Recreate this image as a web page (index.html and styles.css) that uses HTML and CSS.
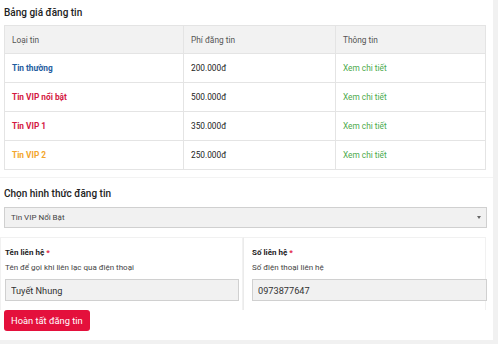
FILE: index.html
```html
<!DOCTYPE html>
<html lang="vi">
<head>
    <meta charset="UTF-8">
    <meta name="viewport" content="width=device-width, initial-scale=1.0">
    <title>Đăng tin</title>
    <link rel="stylesheet" href="styles.css">
</head>
<body>

<div class="page">
    <div class="section">
        <h2 class="section-title">Bảng giá đăng tin</h2>
        <table class="price-table">
            <thead>
                <tr>
                    <th class="col-type">Loại tin</th>
                    <th class="col-fee">Phí đăng tin</th>
                    <th>Thông tin</th>
                </tr>
            </thead>
            <tbody>
                <tr>
                    <td class="type type-normal">Tin thường</td>
                    <td>200.000đ</td>
                    <td><a class="detail" href="#">Xem chi tiết</a></td>
                </tr>
                <tr>
                    <td class="type type-vip">Tin VIP nổi bật</td>
                    <td>500.000đ</td>
                    <td><a class="detail" href="#">Xem chi tiết</a></td>
                </tr>
                <tr>
                    <td class="type type-vip">Tin VIP 1</td>
                    <td>350.000đ</td>
                    <td><a class="detail" href="#">Xem chi tiết</a></td>
                </tr>
                <tr>
                    <td class="type type-vip2">Tin VIP 2</td>
                    <td>250.000đ</td>
                    <td><a class="detail" href="#">Xem chi tiết</a></td>
                </tr>
            </tbody>
        </table>
    </div>

    <div class="section section-form">
        <h2 class="section-title">Chọn hình thức đăng tin</h2>
        <div class="select">
            <span>Tin VIP Nổi Bật</span>
            <span class="select-arrow"></span>
        </div>

        <div class="contact-row">
            <div class="field">
                <label class="field-label">Tên liên hệ <span class="req">*</span></label>
                <div class="field-help">Tên để gọi khi liên lạc qua điện thoại</div>
                <input class="field-input" type="text" value="Tuyết Nhung">
            </div>
            <div class="field">
                <label class="field-label">Số liên hệ <span class="req">*</span></label>
                <div class="field-help">Số điện thoại liên hệ</div>
                <input class="field-input" type="text" value="0973877647">
            </div>
        </div>

        <button class="submit-btn">Hoàn tất đăng tin</button>
    </div>
</div>

</body>
</html>
```

FILE: styles.css
```css
* {
    box-sizing: border-box;
}

body {
    margin: 0;
    background-color: #f1f1f1;
    font-family: Roboto, "Liberation Sans", sans-serif;
    color: #333;
}

.page {
    width: 493px;
    height: 340px;
    background-color: #fff;
}

.section {
    padding: 0 4px;
}

.section-title {
    margin: 0;
    font-size: 10px;
    font-weight: 500;
    color: #222;
    line-height: 14px;
}

.section:first-child .section-title {
    padding: 6px 0 5px 0;
}

.price-table {
    width: 482px;
    border-collapse: collapse;
    font-size: 8.3px;
}

.price-table th,
.price-table td {
    border: 1px solid #e4e4e4;
    text-align: left;
    padding: 0 7px;
}

.price-table th {
    height: 28px;
    background-color: #f2f2f2;
    font-weight: 400;
    color: #555;
}

.price-table td {
    height: 29px;
    color: #222;
}

.col-type {
    width: 179px;
}

.col-fee {
    width: 152px;
}

.type {
    font-weight: 700;
}

.type-normal {
    color: #1d5c9e !important;
}

.type-vip {
    color: #d4173f !important;
}

.type-vip2 {
    color: #f3a52a !important;
}

.detail {
    color: #4caa4c;
    text-decoration: none;
}

.section-form {
    margin-top: 7px;
    border-top: 1px solid #f3f3f3;
    padding-top: 9px;
}

.select {
    margin-top: 6px;
    width: 483px;
    height: 21px;
    background-color: #f1f1f1;
    border: 1px solid #d0d0d0;
    display: flex;
    align-items: center;
    justify-content: space-between;
    padding: 0 5px 0 6px;
    font-size: 8px;
    color: #444;
}

.select-arrow {
    width: 0;
    height: 0;
    border-left: 2.5px solid transparent;
    border-right: 2.5px solid transparent;
    border-top: 3px solid #666;
}

.contact-row {
    display: grid;
    grid-template-columns: 243px 243px;
    margin: 9px 0 0 -4px;
}

.field {
    border: 1px solid #f1f1f1;
    border-bottom: none;
    padding: 9px 4px 9px 4px;
}

.field + .field {
    border-left: 1px solid #ebebeb;
    padding-left: 8px;
}

.field-label {
    display: block;
    font-size: 8px;
    font-weight: 700;
    color: #222;
    line-height: 12px;
}

.req {
    color: #e2173f;
}

.field-help {
    margin-top: 3px;
    font-size: 8px;
    color: #444;
    line-height: 12px;
}

.field-input {
    display: block;
    margin-top: 5px;
    width: 100%;
    height: 22px;
    background-color: #f1f1f1;
    border: 1px solid #d0d0d0;
    padding: 0 5px;
    font-family: inherit;
    font-size: 9.2px;
    color: #333;
    outline: none;
}

.field:first-child .field-input {
    width: 234px;
}

.field + .field .field-input {
    width: 235px;
}

.submit-btn {
    display: block;
    height: 21px;
    padding: 0 7px;
    background-color: #e4103c;
    color: #fff;
    border: none;
    border-radius: 3px;
    font-family: inherit;
    font-size: 9.3px;
    cursor: pointer;
}
```
